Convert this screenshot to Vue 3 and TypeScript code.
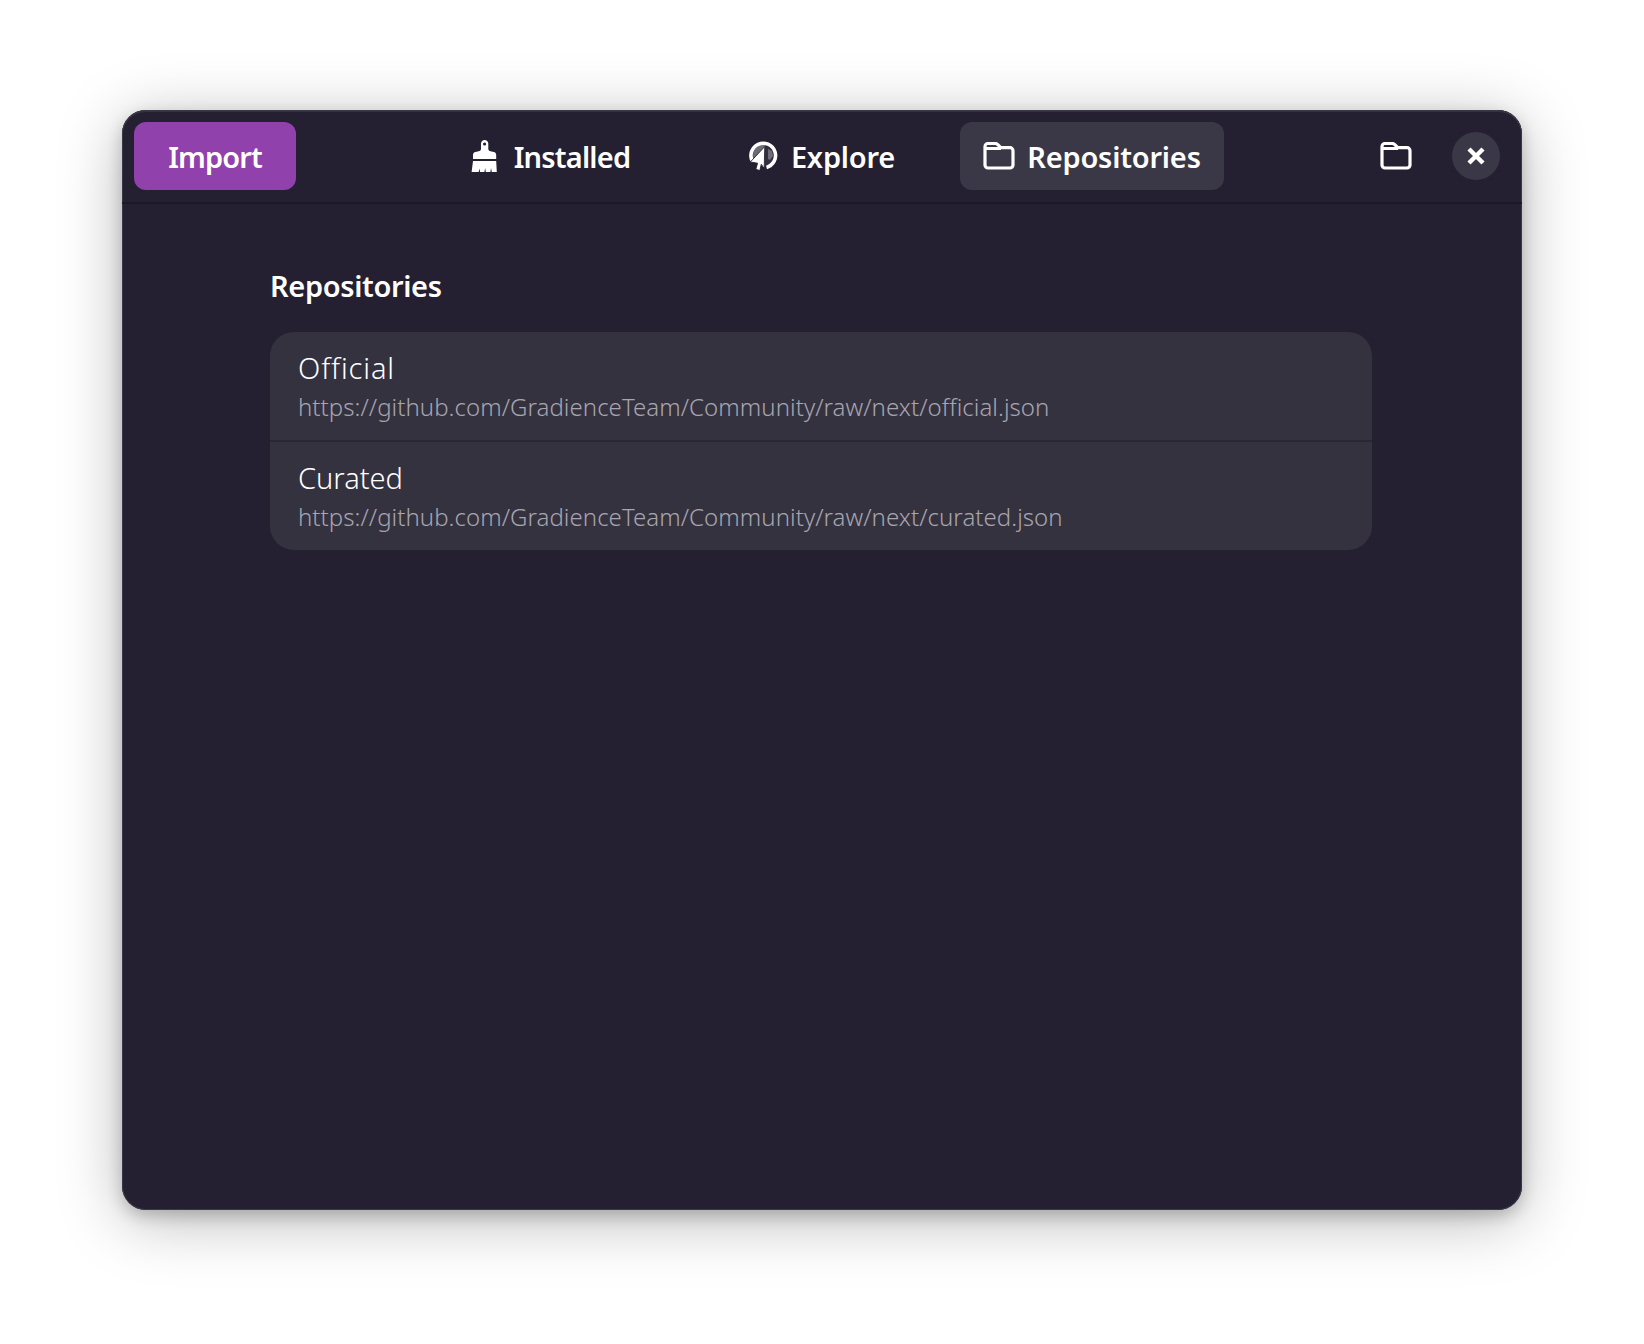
<template>
  <div class="page">
    <div class="window">
      <header class="header">
        <button class="import-btn">Import</button>
        <nav class="tabs">
          <button v-for="tab in tabs" :key="tab.name" class="tab" :class="{ active: tab.name === activeTab }">
            <svg v-if="tab.icon === 'brush'" class="icon" viewBox="2 0 32 32" width="32" height="32">
              <path fill="#fff" fill-rule="evenodd" d="M13 3.6C13 1.6 14.6 0 16.6 0s3.7 1.6 3.7 3.6V9c0 1.2 1 2 2.2 2.3l3.3.7c1.5.3 2.4 1.4 2.4 3V19H5v-4c0-1.600.9-2.700 2.400-3l3.300-.7C12 11 13 10.200 13 9zM16.600 2.400a1.600 1.600 0 1 0 0 3.200 1.600 1.600 0 0 0 0-3.200z" />
              <path fill="#fff" d="M5 21h23.200l.6 11h-5l-.8-4-.6 4h-4.600l-.6-4-.8 4h-4.400l-.4-3.500-1 3.500H3.600z" />
            </svg>
            <svg v-else-if="tab.icon === 'explore'" class="icon" viewBox="-1 0 32 32" width="32" height="32">
              <circle cx="16" cy="15.300" r="11" fill="#fff" opacity=".34" />
              <path fill="#242031" d="M17 4h4l5 6 1 5-1 6-5 5-4 1z" opacity=".8" />
              <path fill="#fff" opacity=".3" d="M20 9l4 2 1 5-3 4-2-1z" />
              <path fill="none" stroke="#fff" stroke-width="3.600" d="M4.500 21.500A12.300 12.300 0 1 1 18.500 27.400" />
              <path fill="#fff" stroke="#242031" stroke-width=".9" stroke-linejoin="round" d="M16.800 6.500 16.200 28.500 13.300 24.300 11.800 30.600 7.800 29.300 9.600 23.200 2.300 22z" />
            </svg>
            <svg v-else class="icon" viewBox="0 0 32 28" width="32" height="28">
              <path fill="none" stroke="#fff" stroke-width="3.200" stroke-linejoin="round" d="M2 4.500a3 3 0 0 1 3-3h7c1.200 0 2 .4 2.800 1.200l3 3H27a3 3 0 0 1 3 3V23a3 3 0 0 1-3 3H5a3 3 0 0 1-3-3zM2 6.500h16" />
            </svg>
            <span>{{ tab.name }}</span>
          </button>
        </nav>
        <div class="actions">
          <svg class="folder" viewBox="0 0 32 28" width="32" height="28">
            <path fill="none" stroke="#fff" stroke-width="3.200" stroke-linejoin="round" d="M2 4.500a3 3 0 0 1 3-3h7c1.200 0 2 .4 2.800 1.200l3 3H27a3 3 0 0 1 3 3V23a3 3 0 0 1-3 3H5a3 3 0 0 1-3-3zM2 6.500h16" />
          </svg>
          <button class="close-btn" aria-label="Close">
            <svg viewBox="0 0 18 18" width="18" height="18">
              <path fill="none" stroke="#fff" stroke-width="4.400" d="M2 2l14 14M16 2 2 16" />
            </svg>
          </button>
        </div>
      </header>
      <main class="content">
        <h2 class="title">Repositories</h2>
        <div class="list">
          <div v-for="repo in repos" :key="repo.name" class="row">
            <div class="row-name">{{ repo.name }}</div>
            <div class="row-url">{{ repo.url }}</div>
          </div>
        </div>
      </main>
    </div>
  </div>
</template>

<script setup lang="ts">
const activeTab = 'Repositories'

const tabs = [
  { name: 'Installed', icon: 'brush' },
  { name: 'Explore', icon: 'explore' },
  { name: 'Repositories', icon: 'folder' }
]

const repos = [
  { name: 'Official', url: 'https://github.com/GradienceTeam/Community/raw/next/official.json' },
  { name: 'Curated', url: 'https://github.com/GradienceTeam/Community/raw/next/curated.json' }
]
</script>

<style scoped>
.page {
  height: 100vh;
  box-sizing: border-box;
  padding: 110px 122px 134px;
  background: #fff;
  font-family: "Noto Sans", "Open Sans", sans-serif;
  font-variant-ligatures: none;
  color: #fff;
  overflow: hidden;
}

.window {
  height: 1100px;
  width: 1400px;
  box-sizing: border-box;
  background: #242031;
  border-radius: 24px;
  box-shadow: inset 0 0 0 1px #3a3746, inset 0 2px 0 #35323f, 0 6px 16px rgba(0, 0, 0, 0.2), 0 10px 64px rgba(0, 0, 0, 0.28);
  display: flex;
  flex-direction: column;
  overflow: hidden;
}

.header {
  height: 94px;
  box-sizing: border-box;
  padding: 12px 22px 12px 12px;
  display: flex;
  align-items: flex-start;
  border-bottom: 2px solid #1b1925;
}

button {
  border: none;
  color: #fff;
  font: inherit;
  padding: 0;
}

.import-btn {
  width: 162px;
  height: 68px;
  border-radius: 12px;
  background: #9141ac;
  font-size: 29px;
  font-weight: 600;
  letter-spacing: -0.9px;
}

.tabs {
  margin-left: 122px;
  display: grid;
  grid-template-columns: repeat(3, 264px);
  gap: 7px;
}

.tab {
  height: 68px;
  border-radius: 12px;
  background: transparent;
  display: flex;
  align-items: center;
  justify-content: center;
  gap: 12px;
  font-size: 29px;
  font-weight: 600;
  letter-spacing: -0.2px;
}

.tab:first-child {
  letter-spacing: -0.8px;
}

.tab.active {
  background: #3a3746;
}

.icon {
  flex: none;
}

.actions {
  margin-left: auto;
  height: 68px;
  display: flex;
  align-items: center;
  gap: 40px;
}

.close-btn {
  width: 48px;
  height: 48px;
  border-radius: 50%;
  background: #3a3746;
  display: flex;
  align-items: center;
  justify-content: center;
}

.content {
  padding: 60px 150px 0 148px;
}

.title {
  margin: 0 0 24px;
  font-size: 29px;
  line-height: 44px;
  font-weight: 600;
  letter-spacing: -0.35px;
}

.list {
  border-radius: 24px;
  background: #353240;
  overflow: hidden;
}

.row {
  height: 108px;
  box-sizing: border-box;
  padding: 18px 28px 0;
}

.row + .row {
  height: 110px;
  border-top: 2px solid #2a2734;
}

.row-name {
  font-size: 29px;
  line-height: 36px;
  font-weight: 300;
}

.row:first-child .row-name {
  letter-spacing: 0.9px;
}

.row-url {
  margin-top: 4px;
  font-size: 24px;
  line-height: 34px;
  font-weight: 300;
  letter-spacing: 0.05px;
  color: #a7a5af;
}
</style>

<style>
html, body {
  margin: 0;
  background: #fff;
}
</style>
